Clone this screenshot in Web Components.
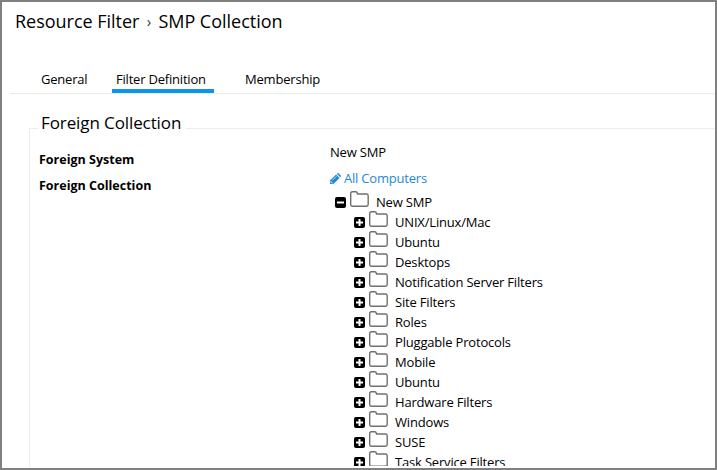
<!DOCTYPE html>
<html lang="en"><head><meta charset="utf-8"><title>Resource Filter</title>
<style>html,body{margin:0;background:#fff}body{width:717px;height:470px;overflow:hidden;font:13px "Open Sans",sans-serif;color:#000}</style>
</head><body><filter-page></filter-page>
<script>
const define = (name, html) => customElements.define(name, class extends HTMLElement {
  constructor() {
    super();
    this.attachShadow({ mode: 'open' }).innerHTML = html;
  }
});

define('bread-crumb', `<style>
:host{display:flex;height:38px;padding-left:13px;line-height:38px;font-size:18px;letter-spacing:-.02px;white-space:nowrap}
i{font-style:normal;width:19px;text-align:center;display:block;color:#333;font-size:15px}
</style><slot name="parent"></slot><i>›</i><slot name="current"></slot>`);

define('tab-item', `<style>
:host{display:block;box-sizing:border-box;height:26px;padding:0 4px;line-height:24px;white-space:nowrap;letter-spacing:-.2px}
:host([active]){border-bottom:4px solid #0a94ec}
</style><slot></slot>`);

define('tab-bar', `<style>
:host{display:flex;box-sizing:border-box;height:27px;margin:27px 0 0 8px;padding-left:27px;border-bottom:1px solid #e9ebed}
</style><slot></slot>`);

define('field-group', `<style>
:host{display:block;margin:34px 0 0 27px;height:339px;box-sizing:border-box;border:solid #e8eef3;border-width:1px 0 0 1px}
header{width:148px;height:24px;margin:-18px 0 0 8px;padding-left:3px;box-sizing:border-box;background:#fff;font-size:17px;line-height:24px;letter-spacing:-.1px;white-space:nowrap}
main{display:grid;grid-template-columns:291px 1fr;margin:5px 0 0 9px}
</style><header><slot name="legend"></slot></header><main><slot></slot></main>`);

define('field-label', `<style>
:host{display:block;height:26px;padding-top:7px;box-sizing:border-box;font-weight:700;font-size:12.5px;white-space:nowrap;line-height:26px}
</style><slot></slot>`);

define('field-value', `<style>
:host{display:block;height:26px;line-height:24px;white-space:nowrap;letter-spacing:-.2px}
</style><slot></slot>`);

define('edit-link', `<style>
:host{display:flex;align-items:center;color:#1d87dc;gap:3px}
svg{display:block;margin-top:1px}
</style><svg width="11" height="11" viewBox="0 0 11 11"><path d="M0 11V7.6L6.1 1.5l3.4 3.4L3.4 11zM6.8.8 7.3.3q.6-.6 1.2 0l2.2 2.2q.6.6 0 1.2l-.5.5z" fill="#1d87dc"/><path d="M.9 8.2v1h.9v.9h1M2.4 7.3l4-4" fill="none" stroke="#fff" stroke-width=".7"/></svg><slot></slot>`);

define('tree-node', `<style>
:host{display:flex;height:20px;padding-left:23px;line-height:20px;white-space:nowrap;letter-spacing:-.18px}
:host([open]){padding-left:4px}
svg{display:block;flex:none}
.t{margin:5px 4px 0 1px}.f{margin:-1px 7px 0 0}
:host([open]) .plus{display:none}
</style><svg class="t" width="11" height="11" viewBox="0 0 11 11"><rect width="11" height="11" rx="2" fill="#000"/><path d="M2 5.5h7" stroke="#fff" stroke-width="2"/><path class="plus" d="M5.5 2v7" stroke="#fff" stroke-width="2"/></svg><svg class="f" width="19" height="17" viewBox="0 0 19 17"><path d="M.7 13.5V2.5Q.7.8 2.3.8h3.4q1.5 0 1.6 1.3l.2.9h8.9q1.8 0 1.8 1.7v8.9q0 1.7-1.8 1.7H2.5Q.7 15.3.7 13.5z" fill="#fff" stroke="#707070" stroke-width="1.4"/></svg><slot></slot>`);

define('folder-tree', `<style>
:host{display:block;grid-column:2;box-sizing:border-box;height:275px;margin-top:-1px;padding-top:1px;overflow:hidden}
</style><slot></slot>`);

define('filter-page', `<style>
:host{display:block;box-sizing:border-box;width:717px;height:470px;border:2px solid #808080;overflow:hidden}
</style>
<bread-crumb><span slot="parent">Resource Filter</span><span slot="current">SMP Collection</span></bread-crumb>
<tab-bar><tab-item style="width:75px">General</tab-item><tab-item active style="width:102px">Filter Definition</tab-item><tab-item style="margin-left:27px">Membership</tab-item></tab-bar>
<field-group><span slot="legend">Foreign Collection</span>
<field-label>Foreign System</field-label><field-value>New SMP</field-value>
<field-label>Foreign Collection</field-label><field-value><edit-link>All Computers</edit-link></field-value>
<folder-tree><tree-node open>New SMP</tree-node>${['UNIX/Linux/Mac','Ubuntu','Desktops','Notification Server Filters','Site Filters','Roles','Pluggable Protocols','Mobile','Ubuntu','Hardware Filters','Windows','SUSE','Task Service Filters'].map(t => `<tree-node>${t}</tree-node>`).join('')}</folder-tree>
</field-group>`);
</script></body></html>
